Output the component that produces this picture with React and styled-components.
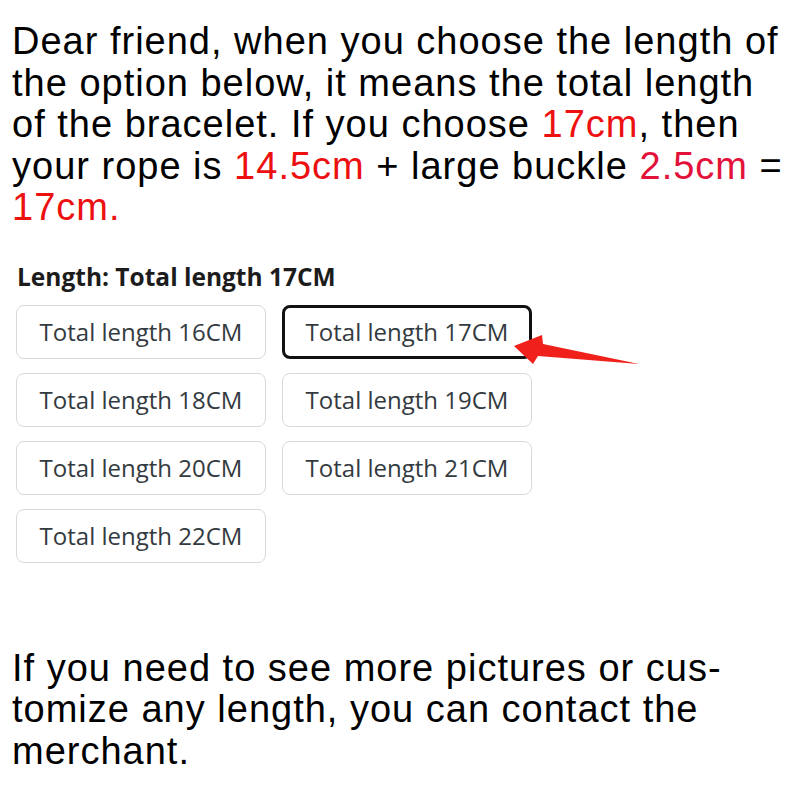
import styled, { createGlobalStyle } from 'styled-components';

const GlobalStyle = createGlobalStyle`
  html, body {
    margin: 0;
    padding: 0;
    background: #fff;
  }
  body {
    width: 800px;
    height: 800px;
    overflow: hidden;
  }
`;

// Page shell
const Page = styled.div`
  width: 800px;
  height: 800px;
  display: flex;
  flex-direction: column;
`;

const Notice = styled.p`
  margin: ${(p) => p.$top}px 0 0 12px;
  width: 780px;
  font-family: "Liberation Sans", Arial, sans-serif;
  font-size: 38px;
  line-height: 41.5px;
  letter-spacing: 1px;
  color: #000;
`;

const Red = styled.span`
  display: inline-block;
  color: ${(p) => p.$tone || '#ec1010'};
`;

// Option picker
const Picker = styled.section`
  position: relative;
  margin-top: 33px;
  padding-left: 16px;
  font-family: "Open Sans", "Noto Sans", sans-serif;
`;

const PickerLabel = styled.div`
  padding-left: 1px;
  font-size: 24.5px;
  font-weight: 700;
  line-height: 30px;
  color: #1c1c1c;
`;

const OptionGrid = styled.div`
  margin-top: 13px;
  display: grid;
  grid-template-columns: 250px 250px;
  column-gap: 16px;
  row-gap: 14px;
`;

const Option = styled.div`
  box-sizing: border-box;
  height: 54px;
  display: flex;
  align-items: center;
  justify-content: center;
  border: ${(p) => (p.$active ? '3px solid #111' : '1.5px solid #d9d9d9')};
  border-radius: 8px;
  font-size: 24px;
  color: #333a40;
  background: #fff;
`;

const Arrow = styled.svg`
  position: absolute;
  left: 505px;
  top: 64px;
`;

const lengths = [16, 17, 18, 19, 20, 21, 22];

const App = () => (
  <Page>
    <GlobalStyle />
    <Notice $top={21}>
      Dear friend, when you choose the length of the option below, it means the total
      length of the bracelet. If you choose <Red>17cm</Red>, then your rope is{' '}
      <Red>14.5cm</Red> + large buckle <Red $tone="#e3123a">2.5cm</Red> ={' '}
      <Red>17cm.</Red>
    </Notice>

    <Picker>
      <PickerLabel>Length: Total length 17CM</PickerLabel>
      <OptionGrid>
        {lengths.map((n) => (
          <Option key={n} $active={n === 17}>
            Total length {n}CM
          </Option>
        ))}
      </OptionGrid>
      <Arrow width="145" height="45" viewBox="0 0 145 45">
        <polygon
          points="9,20 37,9 38,18 134,38 33,30 28,38"
          fill="#f0201a"
        />
      </Arrow>
    </Picker>

    <Notice $top={85}>
      If you need to see more pictures or cus-tomize any length, you can contact the
      merchant.
    </Notice>
  </Page>
);

export default App;
